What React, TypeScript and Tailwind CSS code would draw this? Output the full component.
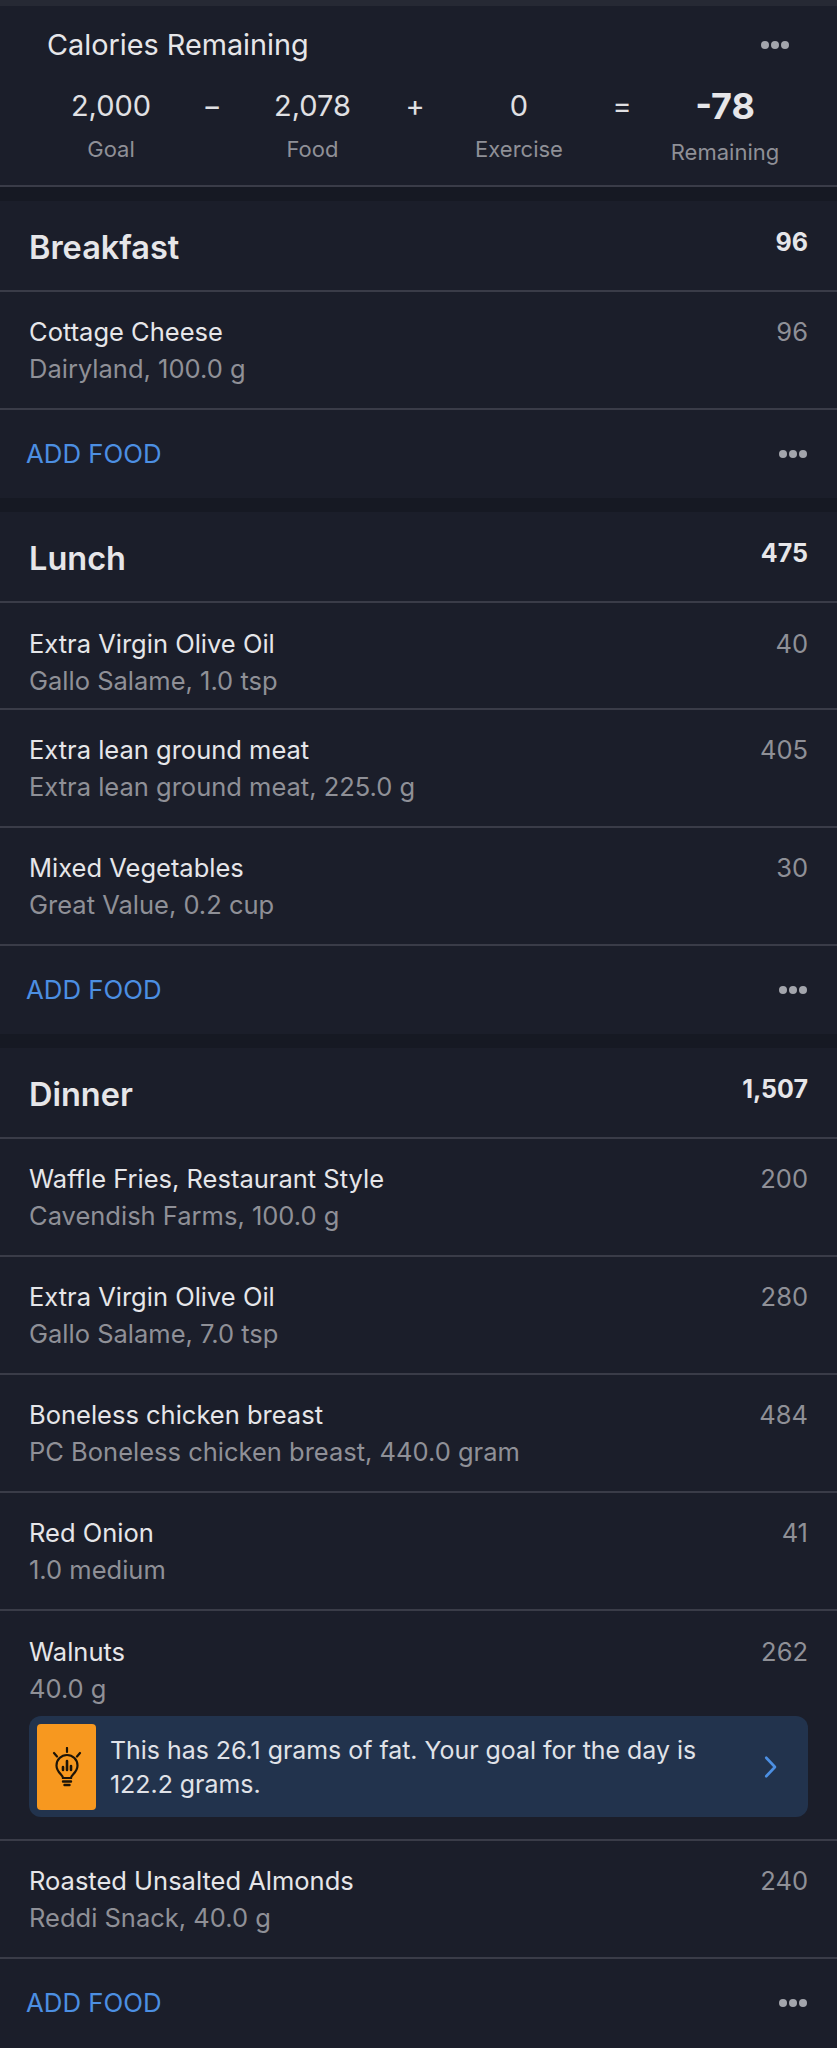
const font = { fontFamily: 'Inter, "Liberation Sans", sans-serif' };

type Food = { name: string; sub: string; cals: string; rowClass: string };

const breakfast: Food[] = [{ name: 'Cottage Cheese', sub: 'Dairyland, 100.0 g', cals: '96', rowClass: 'h-[118px]' }];

const lunch: Food[] = [
    { name: 'Extra Virgin Olive Oil', sub: 'Gallo Salame, 1.0 tsp', cals: '40', rowClass: 'h-[107px] pt-[1px]' },
    { name: 'Extra lean ground meat', sub: 'Extra lean ground meat, 225.0 g', cals: '405', rowClass: 'h-[118px]' },
    { name: 'Mixed Vegetables', sub: 'Great Value, 0.2 cup', cals: '30', rowClass: 'h-[118px]' },
];

const dinnerTop: Food[] = [
    { name: 'Waffle Fries, Restaurant Style', sub: 'Cavendish Farms, 100.0 g', cals: '200', rowClass: 'h-[118px]' },
    { name: 'Extra Virgin Olive Oil', sub: 'Gallo Salame, 7.0 tsp', cals: '280', rowClass: 'h-[118px]' },
    { name: 'Boneless chicken breast', sub: 'PC Boneless chicken breast, 440.0 gram', cals: '484', rowClass: 'h-[118px]' },
    { name: 'Red Onion', sub: '1.0 medium', cals: '41', rowClass: 'h-[118px]' },
];

function Dots({ className }: { className: string }) {
    return (
        <svg className={className} width="30" height="10" viewBox="0 0 30 10" fill="#a3a5ac">
            <circle cx="5" cy="5" r="4" />
            <circle cx="15" cy="5" r="4" />
            <circle cx="25" cy="5" r="4" />
        </svg>
    );
}

function Bulb() {
    return (
        <svg width="30" height="40" viewBox="0 0 30 40" fill="none" stroke="#1d1408" strokeWidth="2.2" strokeLinecap="round">
            <path d="M15 1v4M2 6l3 3.500M28 6l-3 3.500" />
            <path d="M11 31c0-3-6.500-5.500-6.500-12.500a10.500 10.500 0 0 1 21 0c0 7-6.500 9.500-6.500 12.500z" />
            <path d="M11 34.500h8M12.500 38h5" strokeWidth="2.400" />
            <path d="M11 20v3M15 14v9M19 19v4" strokeWidth="2.600" />
        </svg>
    );
}

function Row({ food, children }: { food: Food; children?: React.ReactNode }) {
    return (
        <div className={`border-b-[2px] border-[#3a3c48] px-[29px] ${food.rowClass}`}>
            <div className="flex justify-between pt-[23px] text-[25.5px] leading-[34px]">
                <span className="text-[#e6e6e9]">{food.name}</span>
                <span className="text-[#8f9097]">{food.cals}</span>
            </div>
            <div className="pt-[3px] text-[25.5px] leading-[34px] text-[#8f9097]">{food.sub}</div>
            {children}
        </div>
    );
}

function SectionHead({ title, total }: { title: string; total: string }) {
    return (
        <div className="flex h-[91px] justify-between border-b-[2px] border-[#3a3c48] px-[29px]">
            <span className="pt-[28px] text-[32.5px] leading-[38px] font-semibold text-[#e6e6e9]">{title}</span>
            <span className="pt-[25px] text-[25px] leading-[32px] font-bold text-[#e6e6e9]">{total}</span>
        </div>
    );
}

function AddFood({ className }: { className: string }) {
    return (
        <div className={`flex items-center justify-between pr-[29px] pl-[26px] ${className}`}>
            <span className="text-[25.8px] leading-[32px] text-[#4c8fe2]">ADD FOOD</span>
            <Dots className="" />
        </div>
    );
}

function Stat({ width, value, label, bold }: { width: string; value: string; label?: string; bold?: boolean }) {
    return (
        <div className={`flex flex-col items-center ${width}`}>
            <span className={bold ? 'text-[36px] leading-[40px] font-bold text-[#e6e6e9]' : 'text-[29px] leading-[40px] text-[#e0e0e3]'}>
                {value}
            </span>
            {label && (
                <span className={`text-[22px] leading-[28px] text-[#8f9097] ${bold ? 'pt-[12px]' : 'pt-[9px]'}`}>{label}</span>
            )}
        </div>
    );
}

export default function App() {
    return (
        <div className="h-[2048px] w-[837px] overflow-hidden bg-[#161923]" style={font}>
            {/* Calories header */}
            <div className="h-[187px] border-t-[6px] border-b-[2px] border-t-[#262934] border-b-[#3a3c48] bg-[#1b1e2a]">
                <div className="flex items-center justify-between pt-[21px] pr-[47px] pl-[47px]">
                    <span className="text-[28.8px] leading-[36px] text-[#e6e6e9]">Calories Remaining</span>
                    <Dots className="" />
                </div>
                <div className="flex pt-[23px] pl-[60px]">
                    <Stat width="w-[102px]" value="2,000" label="Goal" />
                    <Stat width="w-[100px]" value="−" />
                    <Stat width="w-[101px]" value="2,078" label="Food" />
                    <Stat width="w-[104px]" value="+" />
                    <Stat width="w-[104px]" value="0" label="Exercise" />
                    <Stat width="w-[102px]" value="=" />
                    <Stat width="w-[104px]" value="-78" label="Remaining" bold />
                </div>
            </div>

            {/* Breakfast */}
            <div className="mt-[14px] bg-[#1b1e2a]">
                <SectionHead title="Breakfast" total="96" />
                {breakfast.map((f) => (
                    <Row key={f.name} food={f} />
                ))}
                <AddFood className="h-[88px]" />
            </div>

            {/* Lunch */}
            <div className="mt-[14px] bg-[#1b1e2a]">
                <SectionHead title="Lunch" total="475" />
                {lunch.map((f) => (
                    <Row key={f.name} food={f} />
                ))}
                <AddFood className="h-[88px]" />
            </div>

            {/* Dinner */}
            <div className="mt-[14px] bg-[#1b1e2a] pb-[10px]">
                <SectionHead title="Dinner" total="1,507" />
                {dinnerTop.map((f) => (
                    <Row key={f.sub} food={f} />
                ))}
                <Row food={{ name: 'Walnuts', sub: '40.0 g', cals: '262', rowClass: 'h-[230px] pt-[1px]' }}>
                    <div className="mt-[10px] flex h-[101px] items-center rounded-[12px] bg-[#22334d] pr-[31px] pl-[8px]">
                        <div className="flex h-[86px] w-[59px] shrink-0 items-center justify-center rounded-[4px] bg-[#f7981f]">
                            <Bulb />
                        </div>
                        <p className="grow pl-[14px] text-[24.9px] leading-[34px] text-[#e0e2e8]">
                            This has 26.1 grams of fat. Your goal for the day is 122.2 grams.
                        </p>
                        <svg width="15" height="26" viewBox="0 0 15 26" fill="none" stroke="#4c8fe2" strokeWidth="3" strokeLinecap="round" strokeLinejoin="round">
                            <path d="M2.500 2.500l10 10.500-10 10.500" />
                        </svg>
                    </div>
                </Row>
                <Row food={{ name: 'Roasted Unsalted Almonds', sub: 'Reddi Snack, 40.0 g', cals: '240', rowClass: 'h-[118px]' }} />
                <AddFood className="h-[88px]" />
            </div>
        </div>
    );
}
